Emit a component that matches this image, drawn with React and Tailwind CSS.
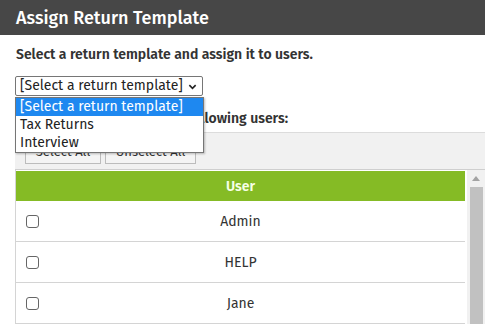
import { useState } from 'react';

const users = ['Admin', 'HELP', 'Jane'];

export default function App() {
  const [checked, setChecked] = useState({});

  return (
    <div className="w-[485px] h-[327px] overflow-hidden bg-white font-['Fira_Sans','Noto_Sans',sans-serif] text-[#333]">
      <div className="h-[35px] bg-[#474747] pl-[16px] flex items-center">
        <h1 className="text-[18px] font-medium text-white leading-none">Assign Return Template</h1>
      </div>

      <div className="pl-[15px]">
        <p className="mt-[11px] text-[14px] font-semibold leading-[18px] pl-[1px]">
          Select a return template and assign it to users.
        </p>

        <div className="relative mt-[12px] h-[20px]">
          <div className="w-[188px] h-[20px] border border-[#767676] rounded-[2px] flex items-center pl-[4px] pr-[5px] text-[14px] leading-none text-[#222]">
            <span className="flex-1">[Select a return template]</span>
            <svg className="w-[9px] h-[9px]" viewBox="0 0 10 10" fill="none" stroke="#222" strokeWidth={1.8}>
              <path d="M1.5 3.5 L5 7 L8.5 3.5" />
            </svg>
          </div>

          <div className="absolute left-0 top-[21px] z-10 w-[189px] border border-[#767676] bg-white shadow-[1px_1px_2px_rgba(0,0,0,0.25)] text-[14px] leading-[18px] text-[#222]">
            <div className="bg-[#1e88f0] text-white pl-[4px]">[Select a return template]</div>
            <div className="pl-[4px]">Tax Returns</div>
            <div className="pl-[4px]">Interview</div>
          </div>
        </div>

        <p className="mt-[14px] text-[14px] font-semibold leading-[18px] pl-[1px]">
          Assign the template to the following users:
        </p>

        <div className="mt-[4px] h-[38px] bg-[#f1f1f1] border-t border-[#dcdcdc] border-b border-b-[#cfcfcf] flex items-end gap-[4px] pl-[10px] pb-[5px]">
          <button className="h-[25px] w-[76px] border border-[#bcbcbc] bg-[#f4f4f4] text-[13px] text-[#333]">Select All</button>
          <button className="h-[25px] w-[91px] border border-[#bcbcbc] bg-[#f4f4f4] text-[13px] text-[#333]">Unselect All</button>
        </div>

        <div className="flex w-[470px]">
          <div className="flex-1 border-l border-[#d4d4d4]">
            <div className="h-[30px] mt-[1px] bg-[#85bb25] flex items-center justify-center text-[14px] font-semibold text-[#f6ffe6]">
              User
            </div>
            {users.map(u => (
              <label key={u} className="h-[41px] border-b border-[#d4d4d4] flex items-center relative">
                <input
                  type="checkbox"
                  checked={!!checked[u]}
                  onChange={() => setChecked({ ...checked, [u]: !checked[u] })}
                  className="appearance-none absolute left-[10px] w-[13px] h-[13px] border border-[#666] rounded-[3px] bg-white"
                />
                <span className="flex-1 text-center text-[14px] text-[#333]">{u}</span>
              </label>
            ))}
          </div>
          <div className="w-[18px] ml-[2px] bg-[#f1f1f1] flex flex-col items-center">
            <svg className="mt-[6px] w-[8px] h-[5px]" viewBox="0 0 8 5">
              <path d="M0 5 L4 0 L8 5 Z" fill="#a3a3a3" />
            </svg>
            <div className="mt-[6px] w-[13px] flex-1 bg-[#c1c1c1]" />
          </div>
        </div>
      </div>
    </div>
  );
}
